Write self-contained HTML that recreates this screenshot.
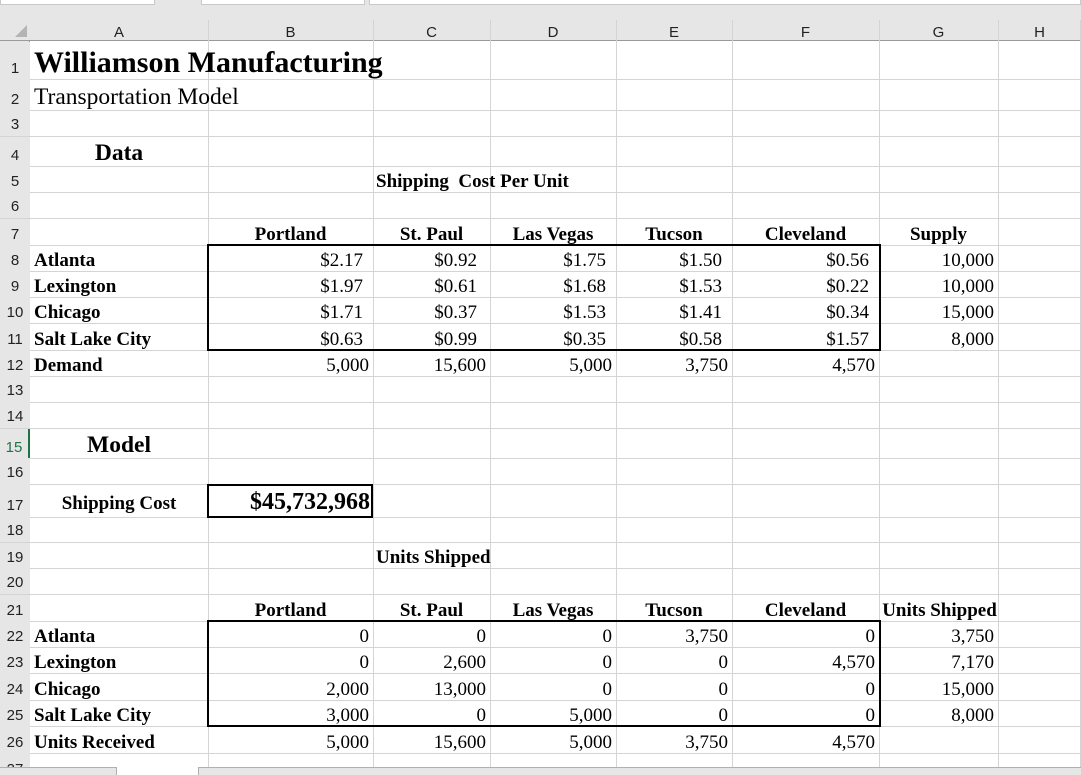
<!DOCTYPE html>
<html><head><meta charset="utf-8"><style>
*{margin:0;padding:0;box-sizing:border-box}
body{width:1081px;height:775px;overflow:hidden;background:#fff;position:relative;font-family:"Liberation Serif",serif;color:#000}
.vl{position:absolute;top:20px;width:1px;height:747px;background:#d4d4d4}
.hl{position:absolute;left:0;width:1081px;height:1px;background:#d4d4d4}
.row{position:absolute;left:0;width:1081px;display:grid;grid-template-columns:30px 178px 165px 117px 126px 116px 147px 119px 83px;font-size:19px}
.row>div{display:flex;align-items:flex-end;padding-bottom:0;white-space:nowrap;overflow:visible}
.n{justify-content:center;font-family:"Liberation Sans",sans-serif;font-size:15px;color:#222;background:#e6e6e6;height:100%;padding-bottom:3px!important}
.r{justify-content:flex-end;padding-right:4px}
.r10{justify-content:flex-end;padding-right:10px}
.c{justify-content:center}
.b{font-weight:bold}
.l{padding-left:4px}
.box{position:absolute;border:2px solid #000}
</style></head><body>
<div style="position:absolute;left:0;top:0;width:1081px;height:20px;background:#e6e6e6"></div>
<div style="position:absolute;left:0;top:0;width:155px;height:5px;background:#fff;border:1px solid #c8c8c8;border-top:none"></div>
<div style="position:absolute;left:201px;top:0;width:164px;height:5px;background:#fff;border:1px solid #c8c8c8;border-top:none"></div>
<div style="position:absolute;left:369px;top:0;width:712px;height:5px;background:#fff;border:1px solid #c8c8c8;border-top:none"></div>
<div style="position:absolute;left:0;top:20px;width:1081px;height:21px;background:#e6e6e6;border-bottom:1px solid #9a9a9a"></div>
<div style="position:absolute;left:0;top:41px;width:30px;height:726px;background:#e6e6e6;border-right:1px solid #9a9a9a"></div>
<svg style="position:absolute;left:14px;top:24px" width="14" height="14"><polygon points="13,1 13,13 1,13" fill="#b4b4b4"/></svg>
<div class="row" style="top:20px;height:21px;font-family:'Liberation Sans',sans-serif;font-size:15px;color:#222">
<div></div><div class="c">A</div><div class="c">B</div><div class="c">C</div><div class="c">D</div><div class="c">E</div><div class="c">F</div><div class="c">G</div><div class="c">H</div></div>
<div class="vl" style="left:208px"></div><div class="vl" style="left:373px"></div><div class="vl" style="left:490px"></div><div class="vl" style="left:616px"></div><div class="vl" style="left:732px"></div><div class="vl" style="left:879px"></div><div class="vl" style="left:998px"></div><div class="vl" style="left:1080px"></div>
<div class="hl" style="top:79px"></div><div class="hl" style="top:110px"></div><div class="hl" style="top:136px"></div><div class="hl" style="top:166px"></div><div class="hl" style="top:192px"></div><div class="hl" style="top:218px"></div><div class="hl" style="top:245px"></div><div class="hl" style="top:271px"></div><div class="hl" style="top:297px"></div><div class="hl" style="top:323px"></div><div class="hl" style="top:350px"></div><div class="hl" style="top:376px"></div><div class="hl" style="top:402px"></div><div class="hl" style="top:428px"></div><div class="hl" style="top:458px"></div><div class="hl" style="top:484px"></div><div class="hl" style="top:517px"></div><div class="hl" style="top:542px"></div><div class="hl" style="top:568px"></div><div class="hl" style="top:594px"></div><div class="hl" style="top:621px"></div><div class="hl" style="top:647px"></div><div class="hl" style="top:673px"></div><div class="hl" style="top:700px"></div><div class="hl" style="top:726px"></div><div class="hl" style="top:753px"></div>

<div class="row" style="top:42px;height:38px"><div class="n">1</div><div class="b l" style="font-size:30px">Williamson Manufacturing</div></div>
<div class="row" style="top:80px;height:31px"><div class="n">2</div><div class="l" style="font-size:23.5px">Transportation Model</div></div>
<div class="row" style="top:110px;height:26px"><div class="n">3</div></div>
<div class="row" style="top:137px;height:30px"><div class="n">4</div><div class="c b" style="font-size:23.5px">Data</div></div>
<div class="row" style="top:167px;height:26px"><div class="n">5</div><div></div><div></div><div class="b l" style="padding-left:3px">Shipping&nbsp; Cost Per Unit</div></div>
<div class="row" style="top:192px;height:26px"><div class="n">6</div></div>
<div class="row" style="top:219px;height:27px"><div class="n">7</div><div></div><div class="c b">Portland</div><div class="c b">St. Paul</div><div class="c b">Las Vegas</div><div class="c b">Tucson</div><div class="c b">Cleveland</div><div class="c b">Supply</div></div>
<div class="row" style="top:246px;height:26px"><div class="n">8</div><div class="b l">Atlanta</div><div class="r10">$2.17</div><div class="r10" style="padding-right:13px">$0.92</div><div class="r10">$1.75</div><div class="r10">$1.50</div><div class="r10">$0.56</div><div class="r">10,000</div></div>
<div class="row" style="top:272px;height:26px"><div class="n">9</div><div class="b l">Lexington</div><div class="r10">$1.97</div><div class="r10" style="padding-right:13px">$0.61</div><div class="r10">$1.68</div><div class="r10">$1.53</div><div class="r10">$0.22</div><div class="r">10,000</div></div>
<div class="row" style="top:298px;height:26px"><div class="n">10</div><div class="b l">Chicago</div><div class="r10">$1.71</div><div class="r10" style="padding-right:13px">$0.37</div><div class="r10">$1.53</div><div class="r10">$1.41</div><div class="r10">$0.34</div><div class="r">15,000</div></div>
<div class="row" style="top:324px;height:27px"><div class="n">11</div><div class="b l">Salt Lake City</div><div class="r10">$0.63</div><div class="r10" style="padding-right:13px">$0.99</div><div class="r10">$0.35</div><div class="r10">$0.58</div><div class="r10">$1.57</div><div class="r">8,000</div></div>
<div class="row" style="top:351px;height:26px"><div class="n">12</div><div class="b l">Demand</div><div class="r">5,000</div><div class="r">15,600</div><div class="r">5,000</div><div class="r">3,750</div><div class="r">4,570</div></div>
<div class="row" style="top:376px;height:26px"><div class="n">13</div></div>
<div class="row" style="top:402px;height:26px"><div class="n">14</div></div>
<div class="row" style="top:429px;height:30px"><div class="n" style="color:#217346;border-right:2px solid #217346">15</div><div class="c b" style="font-size:23.5px">Model</div></div>
<div class="row" style="top:458px;height:26px"><div class="n">16</div></div>
<div class="row" style="top:484px;height:33px"><div class="n">17</div><div class="c b" style="padding-bottom:2px">Shipping Cost</div><div class="r b" style="font-size:24px;padding-right:3px;padding-bottom:1px">$45,732,968</div></div>
<div class="row" style="top:517px;height:25px"><div class="n">18</div></div>
<div class="row" style="top:543px;height:26px"><div class="n">19</div><div></div><div></div><div class="b l" style="padding-left:3px">Units Shipped</div></div>
<div class="row" style="top:568px;height:26px"><div class="n">20</div></div>
<div class="row" style="top:595px;height:27px"><div class="n">21</div><div></div><div class="c b">Portland</div><div class="c b">St. Paul</div><div class="c b">Las Vegas</div><div class="c b">Tucson</div><div class="c b">Cleveland</div><div class="c b" style="padding-left:2px">Units Shipped</div></div>
<div class="row" style="top:622px;height:26px"><div class="n">22</div><div class="b l">Atlanta</div><div class="r">0</div><div class="r">0</div><div class="r">0</div><div class="r">3,750</div><div class="r">0</div><div class="r">3,750</div></div>
<div class="row" style="top:648px;height:26px"><div class="n">23</div><div class="b l">Lexington</div><div class="r">0</div><div class="r">2,600</div><div class="r">0</div><div class="r">0</div><div class="r">4,570</div><div class="r">7,170</div></div>
<div class="row" style="top:674px;height:27px"><div class="n">24</div><div class="b l">Chicago</div><div class="r">2,000</div><div class="r">13,000</div><div class="r">0</div><div class="r">0</div><div class="r">0</div><div class="r">15,000</div></div>
<div class="row" style="top:701px;height:26px"><div class="n">25</div><div class="b l">Salt Lake City</div><div class="r">3,000</div><div class="r">0</div><div class="r">5,000</div><div class="r">0</div><div class="r">0</div><div class="r">8,000</div></div>
<div class="row" style="top:727px;height:27px"><div class="n">26</div><div class="b l">Units Received</div><div class="r">5,000</div><div class="r">15,600</div><div class="r">5,000</div><div class="r">3,750</div><div class="r">4,570</div></div>
<div class="row" style="top:753px;height:14px;overflow:hidden"><div class="n" style="align-items:flex-start;padding-top:8px">27</div></div>

<div class="box" style="left:207px;top:244px;width:674px;height:107px"></div>
<div class="box" style="left:207px;top:484px;width:166px;height:34px"></div>
<div class="box" style="left:207px;top:620px;width:674px;height:107px"></div>

<div style="position:absolute;left:0;top:767px;width:1081px;height:8px;background:#e6e6e6;border-top:1px solid #b0b0b0"></div>
<div style="position:absolute;left:116px;top:767px;width:83px;height:8px;background:#fff;border-left:1px solid #b0b0b0;border-right:1px solid #b0b0b0"></div>
</body></html>
